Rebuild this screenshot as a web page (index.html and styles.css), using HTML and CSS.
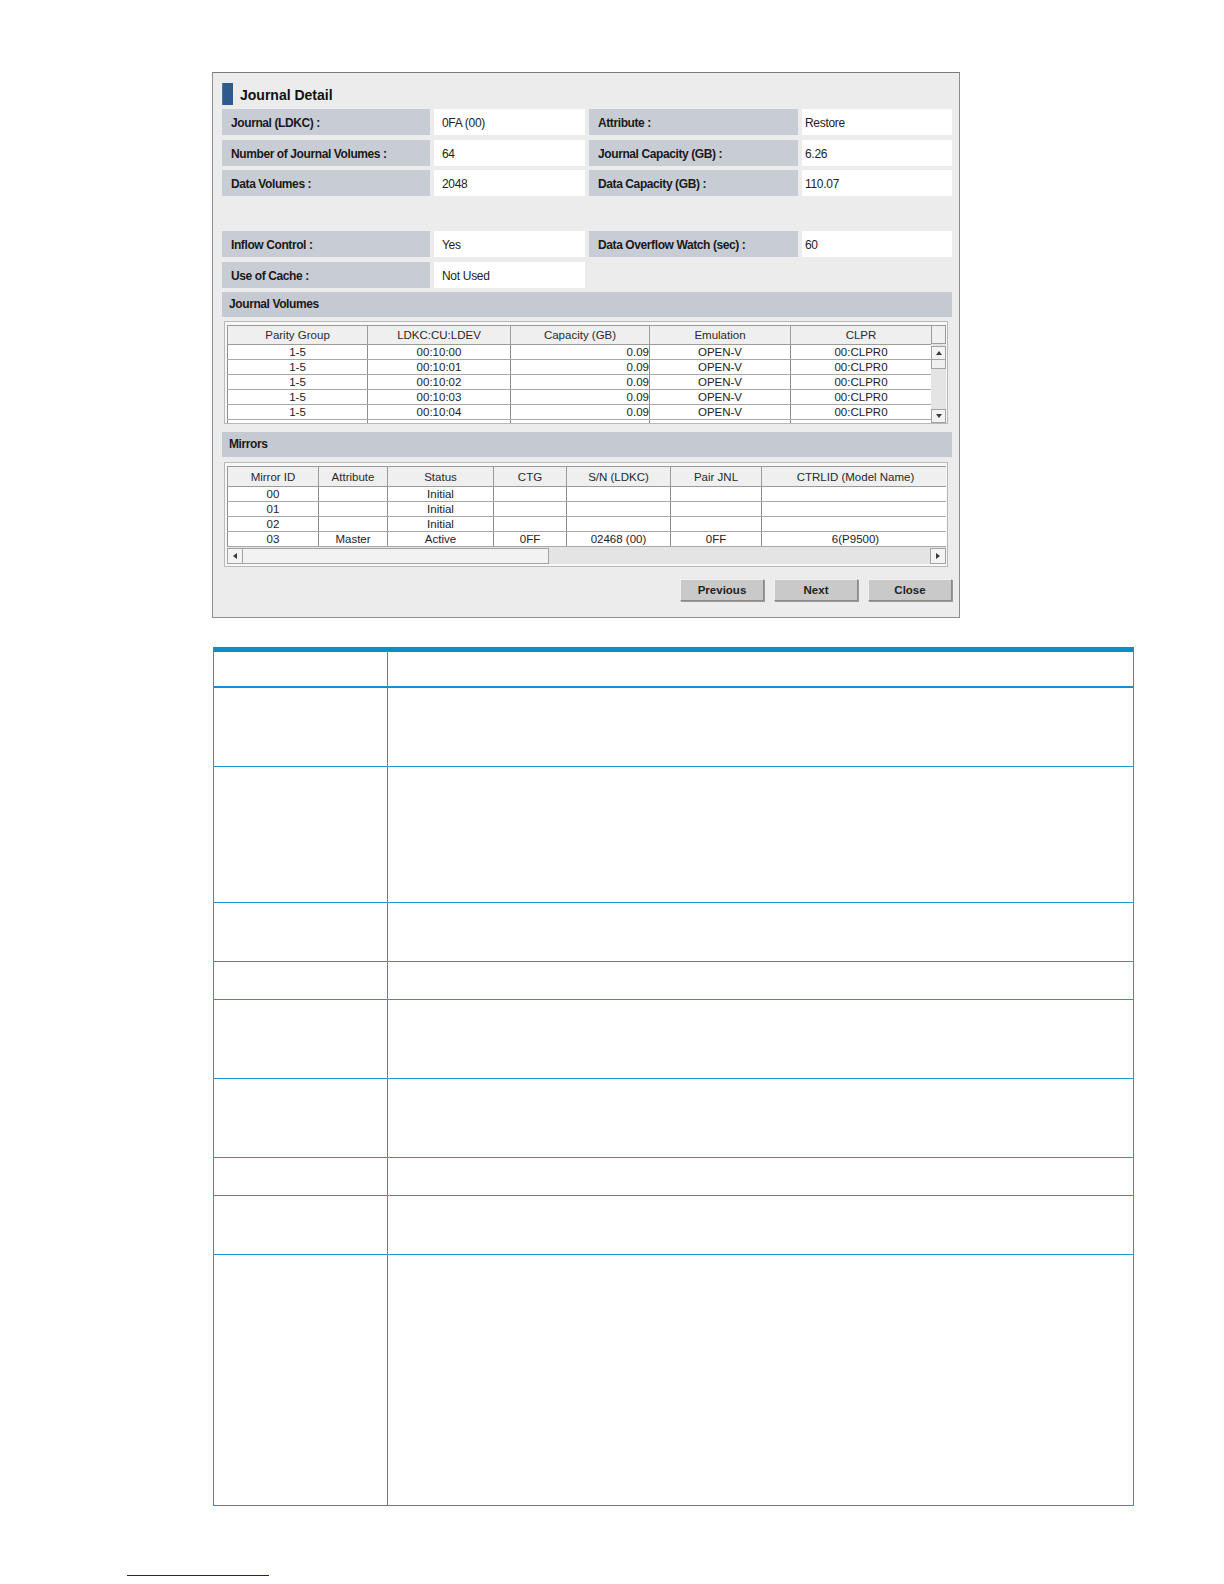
FILE: index.html
```html
<!DOCTYPE html>
<html>
<head>
<meta charset="utf-8">
<title>Journal Detail</title>
<link rel="stylesheet" href="styles.css">
</head>
<body>
<div class="dialog">
  <div class="title"><span class="title-bar"></span><span class="title-text">Journal Detail</span></div>

  <div class="fields">
    <div class="lbl">Journal (LDKC) :</div><div class="val">0FA (00)</div>
    <div class="lbl">Attribute :</div><div class="val val-r">Restore</div>
    <div class="lbl">Number of Journal Volumes :</div><div class="val">64</div>
    <div class="lbl">Journal Capacity (GB) :</div><div class="val val-r">6.26</div>
    <div class="lbl">Data Volumes :</div><div class="val">2048</div>
    <div class="lbl">Data Capacity (GB) :</div><div class="val val-r">110.07</div>
    <div class="spacer"></div>
    <div class="lbl">Inflow Control :</div><div class="val">Yes</div>
    <div class="lbl">Data Overflow Watch (sec) :</div><div class="val val-r">60</div>
    <div class="lbl">Use of Cache :</div><div class="val">Not Used</div>
  </div>

  <div class="section section-jv">Journal Volumes</div>
  <div class="gridbox jv">
    <div class="jv-table">
      <table class="grid">
        <colgroup>
          <col class="w140"><col class="w143"><col class="w139"><col class="w141"><col class="w141">
        </colgroup>
        <thead>
          <tr><th>Parity Group</th><th>LDKC:CU:LDEV</th><th>Capacity (GB)</th><th>Emulation</th><th>CLPR</th></tr>
        </thead>
        <tbody>
          <tr><td>1-5</td><td>00:10:00</td><td class="num">0.09</td><td>OPEN-V</td><td>00:CLPR0</td></tr>
          <tr><td>1-5</td><td>00:10:01</td><td class="num">0.09</td><td>OPEN-V</td><td>00:CLPR0</td></tr>
          <tr><td>1-5</td><td>00:10:02</td><td class="num">0.09</td><td>OPEN-V</td><td>00:CLPR0</td></tr>
          <tr><td>1-5</td><td>00:10:03</td><td class="num">0.09</td><td>OPEN-V</td><td>00:CLPR0</td></tr>
          <tr><td>1-5</td><td>00:10:04</td><td class="num">0.09</td><td>OPEN-V</td><td>00:CLPR0</td></tr>
          <tr><td></td><td></td><td></td><td></td><td></td></tr>
        </tbody>
      </table>
    </div>
    <div class="vscroll">
      <div class="corner"></div>
      <div class="vtrack">
        <div class="sbtn sbtn-v"><span class="arr arr-up"></span></div>
        <div class="vthumb"></div>
        <div class="vfill"></div>
        <div class="sbtn sbtn-v"><span class="arr arr-down"></span></div>
      </div>
    </div>
  </div>

  <div class="section section-mir">Mirrors</div>
  <div class="gridbox mir">
    <div class="mir-table">
      <table class="grid grid-mir">
        <colgroup>
          <col class="w91"><col class="w69"><col class="w106"><col class="w73"><col class="w104"><col class="w91"><col class="w188">
        </colgroup>
        <thead>
          <tr><th>Mirror ID</th><th>Attribute</th><th>Status</th><th>CTG</th><th>S/N (LDKC)</th><th>Pair JNL</th><th>CTRLID (Model Name)</th></tr>
        </thead>
        <tbody>
          <tr><td>00</td><td></td><td>Initial</td><td></td><td></td><td></td><td></td></tr>
          <tr><td>01</td><td></td><td>Initial</td><td></td><td></td><td></td><td></td></tr>
          <tr><td>02</td><td></td><td>Initial</td><td></td><td></td><td></td><td></td></tr>
          <tr><td>03</td><td>Master</td><td>Active</td><td>0FF</td><td>02468 (00)</td><td>0FF</td><td>6(P9500)</td></tr>
        </tbody>
      </table>
    </div>
    <div class="hscroll">
      <div class="sbtn sbtn-h"><span class="arr arr-left"></span></div>
      <div class="hthumb"></div>
      <div class="hfill"></div>
      <div class="sbtn sbtn-h"><span class="arr arr-right"></span></div>
    </div>
  </div>

  <div class="buttons">
    <div class="btn">Previous</div>
    <div class="btn">Next</div>
    <div class="btn">Close</div>
  </div>
</div>

<div class="spec">
  <div class="spec-row spec-head"><div class="spec-c1"></div><div class="spec-c2"></div></div>
  <div class="spec-row h79"><div class="spec-c1"></div><div class="spec-c2"></div></div>
  <div class="spec-row h136"><div class="spec-c1"></div><div class="spec-c2"></div></div>
  <div class="spec-row h59"><div class="spec-c1"></div><div class="spec-c2"></div></div>
  <div class="spec-row h38"><div class="spec-c1"></div><div class="spec-c2"></div></div>
  <div class="spec-row h79"><div class="spec-c1"></div><div class="spec-c2"></div></div>
  <div class="spec-row h79"><div class="spec-c1"></div><div class="spec-c2"></div></div>
  <div class="spec-row h38"><div class="spec-c1"></div><div class="spec-c2"></div></div>
  <div class="spec-row h59"><div class="spec-c1"></div><div class="spec-c2"></div></div>
  <div class="spec-row spec-last"><div class="spec-c1"></div><div class="spec-c2"></div></div>
</div>

<div class="footrule"></div>
</body>
</html>
```

FILE: styles.css
```css
* { box-sizing: border-box; }

body {
  margin: 0;
  background: #ffffff;
  font-family: "Liberation Sans", Arial, sans-serif;
  color: #1a1a1a;
}

/* ---------- dialog ---------- */
.dialog {
  margin: 72px 0 0 212px;
  width: 748px;
  height: 546px;
  border: 1px solid #8e8e8e;
  border-top-color: #7a7a7a;
  background: #ececec;
  padding: 10px 7px 0 9px;
}

.title {
  display: flex;
  align-items: center;
  height: 22px;
  margin-bottom: 4px;
}
.title-bar {
  width: 11px;
  height: 22px;
  background: #2f5b8b;
  border-left: 1px solid #4b76a6;
}
.title-text {
  margin-left: 7px;
  font-size: 14px;
  font-weight: bold;
  color: #111;
  padding-top: 1px;
}

.fields {
  display: grid;
  grid-template-columns: 208px 151px 209px 150px;
  grid-auto-rows: 26px;
  column-gap: 4px;
  row-gap: 4.5px;
}
.spacer { grid-column: 1 / 5; }

.lbl {
  background: #c8ccd4;
  font-size: 12px;
  font-weight: bold;
  letter-spacing: -0.4px;
  color: #1a1a1a;
  line-height: 26px;
  padding: 1px 0 0 9px;
  white-space: nowrap;
}
.val {
  background: #ffffff;
  font-size: 12px;
  letter-spacing: -0.3px;
  color: #222;
  line-height: 26px;
  padding: 1px 0 0 8px;
  white-space: nowrap;
}
.val-r { padding-left: 3px; }

.section {
  background: #c5c9d2;
  height: 25px;
  line-height: 25px;
  font-size: 12px;
  font-weight: bold;
  letter-spacing: -0.4px;
  color: #1a1a1a;
  padding-left: 7px;
  width: 730px;
}
.section-jv { margin-top: 4.5px; }
.section-mir { margin-top: 8px; }

/* ---------- grids ---------- */
.gridbox {
  margin-left: 2px;
  width: 724px;
  border: 1px solid #b9b9b9;
  background: #f7f7f7;
  padding: 3px 1px 0 2px;
  overflow: hidden;
}
.jv {
  margin-top: 4px;
  height: 103px;
  display: flex;
}
.mir {
  margin-top: 5px;
  height: 105px;
  padding-bottom: 3px;
}

.jv-table { width: 704px; overflow: hidden; }
.mir-table { width: 719px; overflow: hidden; }

.grid {
  border-collapse: collapse;
  table-layout: fixed;
  width: 704px;
  font-size: 11.5px;
  color: #222;
}
.grid-mir { width: 722px; }

.w140 { width: 140px; } .w143 { width: 143px; } .w139 { width: 139px; }
.w141 { width: 141px; } .w91 { width: 91px; } .w69 { width: 69px; }
.w106 { width: 106px; } .w73 { width: 73px; } .w104 { width: 104px; }
.w188 { width: 188px; }

.grid th {
  height: 19px;
  padding: 0;
  background: #efefef;
  border: 1px solid #9b9b9b;
  font-weight: normal;
  text-align: center;
  white-space: nowrap;
  overflow: hidden;
  color: #2a2a2a;
}
.grid-mir th { height: 20px; }
.grid td {
  height: 15px;
  padding: 0 1px;
  line-height: 13px;
  background: #ffffff;
  border-left: 1px solid #8d8d8d;
  border-right: 1px solid #8d8d8d;
  border-bottom: 1px solid #a8a8a8;
  text-align: center;
  white-space: nowrap;
  overflow: hidden;
}
.grid td.num { text-align: right; padding-right: 0; }

/* vertical scrollbar */
.vscroll { width: 15px; display: flex; flex-direction: column; }
.corner {
  height: 19px;
  background: #efefef;
  border: 1px solid #9b9b9b;
}
.vtrack {
  display: flex;
  flex-direction: column;
  height: 79px;
  background: #e4e4e4;
  padding-top: 2px;
}
.sbtn {
  background: #f3f3f3;
  border: 1px solid #a3a3a3;
  display: flex;
  align-items: center;
  justify-content: center;
}
.sbtn-v { height: 14px; }
.vthumb {
  height: 9px;
  background: #f0f0f0;
  border: 1px solid #a3a3a3;
  border-top: none;
}
.vfill { flex: 1; }

.arr { width: 0; height: 0; }
.arr-up { border-left: 3px solid transparent; border-right: 3px solid transparent; border-bottom: 4px solid #3a3a3a; }
.arr-down { border-left: 3px solid transparent; border-right: 3px solid transparent; border-top: 4px solid #3a3a3a; }
.arr-left { border-top: 3px solid transparent; border-bottom: 3px solid transparent; border-right: 4px solid #3a3a3a; }
.arr-right { border-top: 3px solid transparent; border-bottom: 3px solid transparent; border-left: 4px solid #3a3a3a; }

/* horizontal scrollbar */
.hscroll {
  display: flex;
  height: 17px;
  width: 719px;
  background: #e4e4e4;
  padding-top: 1px;
}
.sbtn-h { width: 16px; }
.hthumb {
  width: 306px;
  background: #f2f2f2;
  border: 1px solid #a3a3a3;
  border-left: none;
}
.hfill { flex: 1; }

/* buttons */
.buttons {
  display: flex;
  justify-content: flex-end;
  gap: 10px;
  margin-top: 12px;
  width: 730px;
}
.btn {
  width: 84px;
  height: 22px;
  line-height: 20px;
  text-align: center;
  font-size: 11.5px;
  font-weight: bold;
  color: #222;
  background: #c9c9c9;
  border: 1px solid #8a8a8a;
  border-top-color: #f2f2f2;
  border-left-color: #f2f2f2;
  box-shadow: 1px 1px 0 #9a9a9a;
}

/* ---------- spec table below ---------- */
.spec {
  margin: 29px 0 0 213px;
  width: 921px;
  border: 1px solid #2097d4;
  border-top: 5px solid #0b8dca;
}
.spec-row {
  display: flex;
  border-bottom: 1px solid #2097d4;
}
.spec-head { height: 36px; border-bottom: 2px solid #1690cd; }
.h79 { height: 79px; }
.h136 { height: 136px; }
.h59 { height: 59px; }
.h38 { height: 38px; }
.spec-last { height: 250px; border-bottom: none; }
.spec-c1 { width: 174px; border-right: 1px solid #2097d4; }
.spec-c2 { flex: 1; }

.footrule {
  margin: 69px 0 0 127px;
  width: 142px;
  border-top: 1px solid #1e1e8e;
}
```
